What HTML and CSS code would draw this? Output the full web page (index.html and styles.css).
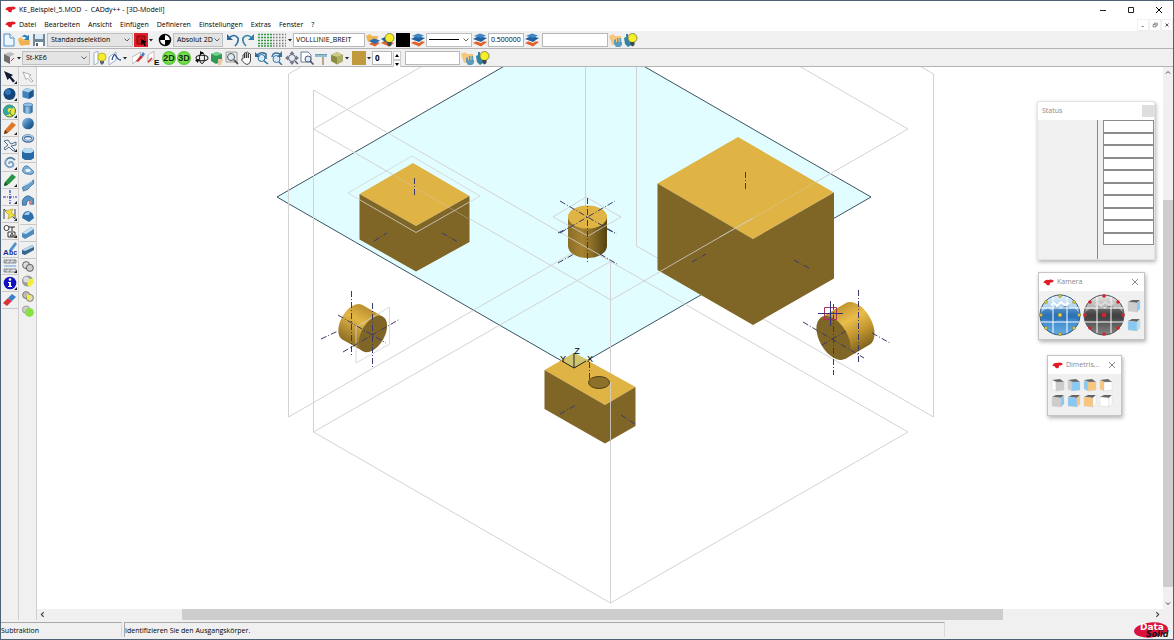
FILE: index.html
```html
<!DOCTYPE html>
<html lang="de">
<head>
<meta charset="utf-8">
<meta name="viewport" content="width=device-width, initial-scale=1">
<title>KE_Beispiel_5.MOD - CADdy++ - [3D-Modell]</title>
<link rel="stylesheet" href="styles.css">
</head>
<body>
<svg class="defs" aria-hidden="true">
  <defs>
    <linearGradient id="gBall" x1="0" y1="0" x2="1" y2="1"><stop offset="0" stop-color="#9cc8ea"/><stop offset=".5" stop-color="#3a7ab5"/><stop offset="1" stop-color="#123a66"/></linearGradient>
    <linearGradient id="gTube" x1="0" x2="1" y1="0" y2="0"><stop offset="0" stop-color="#2b659c"/><stop offset=".4" stop-color="#9fcdee"/><stop offset="1" stop-color="#245a8e"/></linearGradient>
    <radialGradient id="gGreen"><stop offset="0" stop-color="#a4f06a"/><stop offset=".7" stop-color="#6fdc45"/><stop offset="1" stop-color="#4cc030"/></radialGradient>
    <linearGradient id="gSkyBlue" x1="0" x2="0" y1="0" y2="1"><stop offset="0" stop-color="#e3f1fb"/><stop offset=".35" stop-color="#a6cdec"/><stop offset=".5" stop-color="#2f7cc4"/><stop offset="1" stop-color="#68aee4"/></linearGradient>
    <linearGradient id="gSkyGray" x1="0" x2="0" y1="0" y2="1"><stop offset="0" stop-color="#e8e8e8"/><stop offset=".35" stop-color="#a9a9a9"/><stop offset=".5" stop-color="#3c3c3c"/><stop offset="1" stop-color="#858585"/></linearGradient>
    <linearGradient id="gCyl" x1="0" x2="1" y1="0" y2="0"><stop offset="0" stop-color="#8a6d28"/><stop offset=".35" stop-color="#a5822f"/><stop offset=".6" stop-color="#8d7029"/><stop offset="1" stop-color="#54420f"/></linearGradient>
    <linearGradient id="gCylL" gradientUnits="userSpaceOnUse" x1="362" y1="304" x2="342" y2="339"><stop offset="0" stop-color="#b98f30"/><stop offset=".4" stop-color="#e4b645"/><stop offset="1" stop-color="#8d6e25"/></linearGradient>
    <linearGradient id="gCylR" gradientUnits="userSpaceOnUse" x1="845" y1="303" x2="869" y2="345"><stop offset="0" stop-color="#c0952f"/><stop offset=".35" stop-color="#e9bc4b"/><stop offset=".65" stop-color="#c4982f"/><stop offset="1" stop-color="#80631f"/></linearGradient>

    <symbol id="brand" viewBox="0 0 12 8"><path d="M0 4Q2 0 6 1Q9 0 12 2Q12 4 8 4L7 7Q4 8 3 5Z" fill="#e01b24"/></symbol>
    <symbol id="chev" viewBox="0 0 6 4"><path d="M.5 .5L3 3L5.500 .5" fill="none" stroke="#555" stroke-width=".9"/></symbol>
    <symbol id="drop" viewBox="0 0 4 14"><path d="M0 6H4L2 8.500Z" fill="#222"/></symbol>
    <symbol id="new" viewBox="0 0 14 14"><path d="M2 1H8L12 5V13H2Z" fill="#eaf5ff" stroke="#4f8cc4"/><path d="M8 1V5H12" fill="#fff" stroke="#4f8cc4"/></symbol>
    <symbol id="open" viewBox="0 0 14 14"><path d="M1 6L4 4L6 6H12L13 11L4 13Z" fill="#f4c064"/><path d="M1 6L5 8L13 7L12 12L3 12Z" fill="#f0b050"/><path d="M5 4Q7 0 10 3L12 2V7H7L9 5Q8 3 5 4Z" fill="#2c7cc0"/></symbol>
    <symbol id="save" viewBox="0 0 14 14"><path d="M1 1H13V13H1Z" fill="#6e8799"/><path d="M3 1H11V6H3Z" fill="#dbe9f4"/><path d="M3 9H11V13H3Z" fill="#fff"/><path d="M4 10H6V13H4Z" fill="#4a6274"/></symbol>
    <symbol id="pick" viewBox="0 0 14 14"><path d="M0 0H14V14H0Z" fill="#e3202a"/><path d="M3 3H11V11H3Z" fill="#c4141e" stroke="#7c0b12"/><path d="M7 6L13 9L10.500 9.500L12 13L10.500 13L9 10L7 12Z"/></symbol>
    <symbol id="origin" viewBox="0 0 14 14"><circle cx="7" cy="7" r="5.500" fill="#fff" stroke="#111" stroke-width="1.500"/><path d="M7 7V1.500A5.500 5.500 0 0 0 1.500 7ZM7 7V12.500A5.500 5.500 0 0 0 12.500 7Z"/></symbol>
    <symbol id="undo" viewBox="0 0 14 14"><path d="M3 5Q8 0 12 5Q13 9 9 13" fill="none" stroke="#2a6aa0" stroke-width="1.600"/><path d="M1 1V7H7Z" fill="#2a6aa0"/></symbol>
    <symbol id="redo" viewBox="0 0 14 14"><path d="M11 5Q6 0 2 5Q1 9 5 13" fill="none" stroke="#2f7fa5" stroke-width="1.600"/><path d="M13 1V7H7Z" fill="#2f7fa5"/></symbol>
    <symbol id="dots" viewBox="0 0 31 14"><path d="M2 1.500H16M2 4.500H16M2 7.500H16M2 10.500H16M2 13H16" stroke="#2f9a42" stroke-width="1.500" stroke-dasharray="2 1"/><path d="M17 1.500H30M17 4.500H30M17 7.500H30M17 10.500H30M17 13H30" stroke="#777" stroke-width="1.300" stroke-dasharray="1.500 1.500"/></symbol>
    <symbol id="layers" viewBox="0 0 14 14"><path d="M0 10L6 7L14 9L8 13.500Z" fill="#e2622b"/><path d="M0 7L6 4L14 6L8 10Z" fill="#fff"/><path d="M0 6L6 3L14 5L8 9Z" fill="#225f9e"/><path d="M1 3L7 .5L13 2.500L8 5Z" fill="#3d86c6"/></symbol>
    <symbol id="folderlayers" viewBox="0 0 14 14"><path d="M0 3L4 1L6 3L12 3L11 8L2 9Z" fill="#f1b556"/><path d="M3 11L8 8L14 10L9 13.500Z" fill="#e2622b"/><path d="M3 8L8 5.500L14 7.500L9 11Z" fill="#2a6eae"/></symbol>
    <symbol id="bulb" viewBox="0 0 14 14"><circle cx="8.500" cy="5" r="4.200" fill="#f7ee2b" stroke="#a5a015" stroke-width=".7"/><path d="M6.500 9H10.500V12L8.500 13.500L6.500 12Z" fill="#5d6870"/></symbol>
    <symbol id="bulblayers" viewBox="0 0 14 14"><path d="M0 10L5 7L13 10L8 13.500Z" fill="#e2622b"/><path d="M0 6L6 3L12 7L6 10Z" fill="#225f9e"/><circle cx="8.500" cy="5" r="4.500" fill="#f7ee2b" stroke="#6c6a20" stroke-width=".7"/><path d="M6.500 9H10.500V12L8.500 13.500L6.500 12Z" fill="#3d484f"/></symbol>
    <symbol id="folderhand" viewBox="0 0 14 14"><path d="M0 3L4 1L6 3L12 3L13 10L3 12Z" fill="#f7c67c"/><path d="M5 7L7 6V9H8V5H9.500V9H10.500V5H12V9H13V12L11 14H7L5 11Z" fill="#5a9cc0"/></symbol>
    <symbol id="bulbhand" viewBox="0 0 14 14"><path d="M0 5L2 4V1H4V6L7 4V12L4 14L1 11Z" fill="#2f84a8"/><circle cx="8.500" cy="5" r="4.500" fill="#f7ee2b" stroke="#6c6a20" stroke-width=".7"/><path d="M6.500 9H10.500V12L8.500 13.500L6.500 12Z" fill="#3d484f"/></symbol>
    <symbol id="boxgray" viewBox="0 0 14 14"><path d="M2 3L8 1L13 3L8 6Z" fill="#bdbdbd"/><path d="M2 3L8 6V13L2 10Z" fill="#6f6f6f"/><path d="M8 6L13 3V9L8 13Z" fill="#ececec"/><path d="M9 10L12 7" stroke="#d33" stroke-width="1"/></symbol>
    <symbol id="viewbulb" viewBox="0 0 14 14"><path d="M1 2L5 0V12L1 14Z" fill="#fff" stroke="#9bb0c8"/><circle cx="9" cy="6" r="4" fill="#f7ee2b" stroke="#a5a015" stroke-width=".7"/><path d="M7 10H11V12L9 14L7 12Z" fill="#5d6870"/></symbol>
    <symbol id="sketch" viewBox="0 0 14 14"><path d="M1 6L8 1V9L1 14Z" fill="#fff" stroke="#9bb0c8"/><path d="M4 9Q6 1 8 5T13 9" fill="none" stroke="#2b4e90" stroke-width="1.300"/></symbol>
    <symbol id="redpen" viewBox="0 0 14 14"><path d="M0 6L9 1L7 8L0 13Z" fill="#fff" stroke="#b8b8b8"/><path d="M4 10L9 4L11 6L6 11Z" fill="#cf2e2e"/><path d="M9 4L11 1L13 3L11 6Z" fill="#3f83c2"/></symbol>
    <symbol id="plane" viewBox="0 0 14 14"><path d="M1 4L7 0V8L1 12Z" fill="#fff" stroke="#c4b6b6"/><path d="M1 11L5 7" stroke="#cf2e2e" stroke-width="1.500"/><text x="7" y="14" class="glyph">E</text></symbol>
    <symbol id="g2d" viewBox="0 0 14 14"><circle cx="7" cy="7" r="7" fill="url(#gGreen)"/><text x="7" y="10" text-anchor="middle" class="glyph glyph-view">2D</text></symbol>
    <symbol id="g3d" viewBox="0 0 14 14"><circle cx="7" cy="7" r="7" fill="url(#gGreen)"/><text x="7" y="10" text-anchor="middle" class="glyph glyph-view">3D</text></symbol>
    <symbol id="orbit" viewBox="0 0 14 14"><ellipse cx="7" cy="7" rx="6" ry="2.800" fill="none" stroke="#222" stroke-width="1.100"/><ellipse cx="7" cy="7" rx="2.500" ry="5.500" fill="none" stroke="#222"/><path d="M0 9L4 8L3 12ZM9 2L5 0V4Z"/></symbol>
    <symbol id="greencube" viewBox="0 0 14 14"><path d="M1 3L7 1L12 3V10L6 13L1 10Z" fill="#2f9a54"/><path d="M1 3L7 1L12 3L6 5Z" fill="#75cf8f"/><path d="M8 8H13L11 14H8Z" fill="#e8c6a5"/></symbol>
    <symbol id="lens" viewBox="0 0 14 14"><path d="M1 1H12V11H1Z" fill="#e8e8e8" stroke="#9a9a9a"/><circle cx="6" cy="6" r="3.500" fill="#d9ecf7" stroke="#555"/><path d="M9 9L13 13" stroke="#555" stroke-width="1.800"/></symbol>
    <symbol id="hand" viewBox="0 0 14 14"><path d="M3 8V4Q4 3 4.500 4V7V2Q5.500 1 6.300 2V7V1.500Q7.500 .5 8.300 1.500V7V3Q9.500 2 10.500 3V10Q10 13 7 13.500Q5 13.500 1.500 9Q2 7 3 8Z" fill="#fff" stroke="#333" stroke-width=".9"/></symbol>
    <symbol id="zoomback" viewBox="0 0 14 14"><circle cx="6.500" cy="7" r="3.500" fill="#d9ecf7" stroke="#2b6a9a"/><path d="M2 4Q6 0 11 3V8M9 10L13 13" fill="none" stroke="#2b6a9a" stroke-width="1.500"/><path d="M0 1V6H5Z" fill="#2b6a9a"/></symbol>
    <symbol id="zoomfwd" viewBox="0 0 14 14"><circle cx="6.500" cy="8" r="3.500" fill="#d9ecf7" stroke="#35729c"/><path d="M2 6Q3 0 10 3M9 11L12 14" fill="none" stroke="#35729c" stroke-width="1.500"/><path d="M12 0V6H7Z" fill="#35729c"/></symbol>
    <symbol id="zoomall" viewBox="0 0 14 14"><circle cx="7" cy="7" r="3.500" fill="#e3edf2" stroke="#557"/><path d="M7 0L9.500 3H4.500ZM7 14L4.500 11H9.500ZM0 7L3 4.500V9.500ZM14 7L11 9.500V4.500Z" fill="#778"/><path d="M10 10L13 13" stroke="#557" stroke-width="1.500"/></symbol>
    <symbol id="zoompage" viewBox="0 0 14 14"><path d="M1 1H8L11 4V11H1Z" fill="#fff" stroke="#65809a"/><circle cx="8" cy="8" r="3" fill="#d9ecf7" stroke="#557"/><path d="M10 10L13.500 13.500" stroke="#557" stroke-width="1.600"/></symbol>
    <symbol id="roller" viewBox="0 0 14 14"><path d="M0 3H12V6H0Z" fill="#8fc0d6"/><path d="M0 3H12V4H0Z" fill="#7596a8"/><path d="M7 6H9V14H7Z" fill="#b9a888"/></symbol>
    <symbol id="olivecube" viewBox="0 0 14 14"><path d="M1 4L7 1L13 4V10L7 13.500L1 10Z" fill="#8c8c3e"/><path d="M1 4L7 1L13 4L7 6Z" fill="#c9cc8a"/><path d="M7 6L13 4V10L7 13.500Z" fill="#aeb06a"/></symbol>
    <symbol id="corner" viewBox="0 0 14 14"><path d="M14 11V14H11Z" fill="#222"/></symbol>

    <symbol id="arrow" viewBox="0 0 14 14"><path d="M1 1L10 5L8 6.500L12 11L10 12.500L6.500 8L4.500 10Z" fill="#111c33"/></symbol>
    <symbol id="arroww" viewBox="0 0 14 14"><path d="M2 2L10 5L8 6.500L12 11L10.500 12L6.500 8L5 9.500Z" fill="#fff" stroke="#999" stroke-width=".8"/></symbol>
    <symbol id="navball" viewBox="0 0 14 14"><circle cx="6.500" cy="7" r="6" fill="#14457c"/><circle cx="5" cy="5" r="3" fill="#2e76b8"/></symbol>
    <symbol id="swirl" viewBox="0 0 14 14"><circle cx="6.500" cy="7" r="6" fill="#f1e43a" stroke="#2a8048"/><path d="M6 1A6 6 0 0 0 2 11Q5 12 7 9Q4 8 5 5Q7 3 9 5L11 3Q9 1 6 1Z" fill="#35a6a2"/><path d="M8 6Q5 9 10 12" fill="none" stroke="#2a8048"/></symbol>
    <symbol id="pencilo" viewBox="0 0 14 14"><path d="M1 13L2 9L9 1L13 4L6 11Z" fill="#e07a2b"/><path d="M1 13L2 9L5 12Z" fill="#5b3413"/></symbol>
    <symbol id="penciln" viewBox="0 0 14 14"><path d="M1 13L2 9L9 1L13 4L6 11Z" fill="#2a9444"/><path d="M1 13L2 9L5 12Z" fill="#174c22"/></symbol>
    <symbol id="tools" viewBox="0 0 14 14"><path d="M1 3L5 2L8 6L13 4V7L8 8L12 12L10 13L6 9L2 12L1 10L5 7Z" fill="#e8f0f6" stroke="#44617e" stroke-width=".9"/></symbol>
    <symbol id="turn" viewBox="0 0 14 14"><path d="M12 4Q8 0 4 3Q1 6 3 9Q6 13 10 10Q11 8 9 6Q6 5 6 8" fill="none" stroke="#7ba4c8" stroke-width="2"/><path d="M12 4Q8 0 4 3" fill="none" stroke="#476b8c"/></symbol>
    <symbol id="axes" viewBox="0 0 14 14"><path d="M7 0V14M0 7H14" stroke="#2d38c8" stroke-width="1.200" stroke-dasharray="3 1 1 1"/></symbol>
    <symbol id="flash" viewBox="0 0 14 14"><path d="M1 12V2M12 12V2M1 2L12 12" stroke="#445" fill="none"/><path d="M2 4L10 2L8 6L12 8L5 12L6 8Z" fill="#f3e23d" stroke="#9e921a" stroke-width=".6"/></symbol>
    <symbol id="parts" viewBox="0 0 14 14"><circle cx="3.500" cy="4" r="2.500" fill="#fff" stroke="#333"/><path d="M6 3H12M9 3V7M5 8H12V13H5ZM9 9L10.500 12H7Z" fill="#fff" stroke="#333"/></symbol>
    <symbol id="abc" viewBox="0 0 14 14"><path d="M6 8L12 0L14 2L8 10Z" fill="#4f8fd0"/><text x="0" y="13" class="glyph glyph-blue">A</text><text x="6" y="13" class="glyph glyph-blue glyph-small">bc</text></symbol>
    <symbol id="hatch" viewBox="0 0 14 14"><path d="M1 1H13V4H1ZM1 10H13V13H1Z" fill="#dfe6ee" stroke="#666" stroke-width=".7"/><path d="M2 4L4 1M6 4L8 1M10 4L12 1M2 13L4 10M6 13L8 10" stroke="#666" stroke-width=".7"/><path d="M1 6H13V8H1Z" fill="#a9c6e2"/></symbol>
    <symbol id="info" viewBox="0 0 14 14"><circle cx="7" cy="7" r="6.300" fill="#1010c0"/><circle cx="7" cy="3.500" r="1.300" fill="#fff"/><path d="M5 6H8V10H9V11H5V10H6V7H5Z" fill="#fff"/></symbol>
    <symbol id="eraser" viewBox="0 0 14 14"><path d="M0 10L5 5L9 8L4 13Z" fill="#d8333c"/><path d="M5 5L9 1L13 4L9 8Z" fill="#3b80c6"/></symbol>
    <symbol id="cube" viewBox="0 0 14 14"><path d="M1 4L5 1L13 3V10L8 13L1 11Z" fill="#3f84bd"/><path d="M1 4L5 1L13 3L8 6Z" fill="#a9d2ee"/><path d="M8 6L13 3V10L8 13Z" fill="#1f568a"/></symbol>
    <symbol id="tube" viewBox="0 0 14 14"><path d="M2 3V11Q7 15 12 11V3Z" fill="url(#gTube)"/><ellipse cx="7" cy="3" rx="5" ry="2" fill="#8fc2e6" stroke="#2f6ba2" stroke-width=".6"/></symbol>
    <symbol id="ball" viewBox="0 0 14 14"><circle cx="7" cy="7" r="6.300" fill="url(#gBall)"/></symbol>
    <symbol id="torus" viewBox="0 0 14 14"><ellipse cx="7" cy="7" rx="5" ry="3" fill="none" stroke="#35638f" stroke-width="3.200"/><ellipse cx="7" cy="6.500" rx="5" ry="3" fill="none" stroke="#a9cbe8" stroke-width="1.500"/></symbol>
    <symbol id="prism" viewBox="0 0 14 14"><path d="M1 4V11L4 13H10L13 11V4L10 1H4Z" fill="#276aa6"/><path d="M1 4L4 1H10L13 4L10 6H4Z" fill="#b5dcf3"/></symbol>
    <symbol id="sweep" viewBox="0 0 14 14"><path d="M2 4Q5 0 9 4L13 8Q13 12 8 11Q2 11 1 7Z" fill="#7fb2da" stroke="#2c6195" stroke-width=".8"/><ellipse cx="7" cy="7" rx="3" ry="1.500" fill="#e9f4fb"/></symbol>
    <symbol id="loft" viewBox="0 0 14 14"><path d="M1 9Q7 7 13 1V5Q9 8 7 11L2 13Z" fill="#6da3ce" stroke="#2c6195" stroke-width=".8"/><path d="M2 7Q7 5 11 2" fill="none" stroke="#c6dff1" stroke-width="1.500"/></symbol>
    <symbol id="pipe" viewBox="0 0 14 14"><path d="M1 12V7Q3 2 8 2L13 5V11H9V7Q6 6 5 12Z" fill="#5694c6" stroke="#285b8c" stroke-width=".8"/><path d="M9 7H11V11H9Z" fill="#d7868f"/></symbol>
    <symbol id="dome" viewBox="0 0 14 14"><path d="M1 9Q2 2 7 2Q12 3 13 9L8 13Z" fill="#2c6fab"/><path d="M3 6Q5 2 9 3L8 6Z" fill="#9ccaec"/></symbol>
    <symbol id="slab" viewBox="0 0 14 14"><path d="M1 7L10 1L13 3V8L4 13L1 11Z" fill="#4c8abd"/><path d="M1 7L10 1L13 3L5 8Z" fill="#c7e1f4"/></symbol>
    <symbol id="bar" viewBox="0 0 14 14"><path d="M1 7L11 2L13 4V7L4 12L1 11Z" fill="#35688f"/><path d="M1 7L11 2L13 4L4 8Z" fill="#b7d9ef"/></symbol>
    <symbol id="ringsg" viewBox="0 0 14 14"><circle cx="5" cy="5.500" r="3.800" fill="#ddd" stroke="#555"/><circle cx="9" cy="8.500" r="3.800" fill="#ccc" stroke="#555"/></symbol>
    <symbol id="ringy" viewBox="0 0 14 14"><circle cx="6.500" cy="6.500" r="6" fill="#9b9b9b"/><path d="M7 4H13V9L9 13Q5 12 7 4Z" fill="#f2ec3c"/><circle cx="5" cy="5" r="3" fill="#ddd"/></symbol>
    <symbol id="ringsy" viewBox="0 0 14 14"><circle cx="5" cy="5.500" r="3.800" fill="#bbb" stroke="#777"/><circle cx="9" cy="8.500" r="3.800" fill="#e2dfa8" stroke="#777"/><ellipse cx="7" cy="7" rx="1.500" ry="3" fill="#f2ec3c"/></symbol>
    <symbol id="ringsn" viewBox="0 0 14 14"><circle cx="5" cy="5" r="4" fill="#ccc" stroke="#999"/><circle cx="8.500" cy="8" r="4.800" fill="#86e244"/></symbol>
    <symbol id="closex" viewBox="0 0 8 8"><path d="M1 1L7 7M7 1L1 7" stroke="currentColor" fill="none"/></symbol>
  </defs>
</svg>

<div class="window">
  <header class="titlebar">
    <svg class="brand"><use href="#brand"/></svg>
    <h1>KE_Beispiel_5.MOD&nbsp; -&nbsp; CADdy++ - [3D-Modell]</h1>
    <div class="winbtns">
      <button type="button" aria-label="Minimieren"><svg viewBox="0 0 8 8"><path d="M1 4.500H7" stroke="#222"/></svg></button>
      <button type="button" aria-label="Maximieren"><svg viewBox="0 0 8 8"><path d="M1.500 1.500H6.500V6.500H1.500Z" fill="none" stroke="#222"/></svg></button>
      <button type="button" aria-label="Schließen"><svg viewBox="0 0 8 8"><use href="#closex"/></svg></button>
    </div>
  </header>

  <nav class="menubar">
    <svg class="brand"><use href="#brand"/></svg>
    <button type="button">Datei</button><button type="button">Bearbeiten</button><button type="button">Ansicht</button><button type="button">Einfügen</button><button type="button">Definieren</button><button type="button">Einstellungen</button><button type="button">Extras</button><button type="button">Fenster</button><button type="button">?</button>
    <div class="mdibtns">
      <button type="button" aria-label="Dokument minimieren"><svg viewBox="0 0 8 8"><path d="M2 6H5" stroke="#555"/></svg></button>
      <button type="button" aria-label="Dokument wiederherstellen"><svg viewBox="0 0 8 8"><path d="M1.500 3.500H5.500V6.500H1.500ZM3 3V1.500H7V4.500H6" fill="none" stroke="#555" stroke-width=".9"/></svg></button>
      <button type="button" aria-label="Dokument schließen"><svg viewBox="0 0 8 8"><path d="M2 2L6 6M6 2L2 6" stroke="#555" stroke-width="1.300"/></svg></button>
    </div>
  </nav>

  <div class="toolbar" role="toolbar" aria-label="Standard">
    <button type="button" aria-label="Neu"><svg><use href="#new"/></svg></button>
    <button type="button" aria-label="Öffnen"><svg><use href="#open"/></svg></button>
    <button type="button" aria-label="Speichern"><svg><use href="#save"/></svg></button>
    <span class="combo w-sel"><select aria-label="Selektion"><option>Standardselektion</option></select><svg class="chev"><use href="#chev"/></svg></span>
    <button type="button" aria-label="Selektieren"><svg><use href="#pick"/></svg></button>
    <button type="button" class="drop" aria-label="Selektionsarten"><svg><use href="#drop"/></svg></button>
    <i class="sp3"></i>
    <button type="button" aria-label="Ursprung"><svg><use href="#origin"/></svg></button>
    <span class="combo w-abs"><select aria-label="Koordinaten"><option>Absolut 2D</option></select><svg class="chev"><use href="#chev"/></svg></span>
    <i class="sp1"></i>
    <button type="button" aria-label="Rückgängig"><svg><use href="#undo"/></svg></button>
    <button type="button" aria-label="Wiederholen"><svg><use href="#redo"/></svg></button>
    <button type="button" class="wide" aria-label="Raster"><svg><use href="#dots"/></svg></button>
    <button type="button" class="drop" aria-label="Rasterarten"><svg><use href="#drop"/></svg></button>
    <input class="w-line" type="text" aria-label="Linienart" value="VOLLLINIE_BREIT">
    <button type="button" aria-label="Linienart wählen"><svg><use href="#folderlayers"/></svg></button>
    <button type="button" aria-label="Linienart übernehmen"><svg><use href="#bulblayers"/></svg></button>
    <button type="button" class="swatch black" aria-label="Farbe"></button>
    <button type="button" aria-label="Ebene Farbe"><svg><use href="#layers"/></svg></button>
    <span class="combo light w-style"><select aria-label="Strichart"><option></option></select><b class="stroke"></b><svg class="chev"><use href="#chev"/></svg></span>
    <button type="button" aria-label="Ebene Strichart"><svg><use href="#layers"/></svg></button>
    <input class="w-num" type="text" aria-label="Strichbreite" value="0.500000">
    <button type="button" aria-label="Ebene Breite"><svg><use href="#layers"/></svg></button>
    <i class="sp1"></i>
    <input class="w-free" type="text" aria-label="Gruppe">
    <button type="button" aria-label="Gruppe wählen"><svg><use href="#folderhand"/></svg></button>
    <button type="button" aria-label="Gruppe übernehmen"><svg><use href="#bulbhand"/></svg></button>
  </div>

  <div class="toolbar" role="toolbar" aria-label="Modell">
    <button type="button" aria-label="Körper"><svg><use href="#boxgray"/></svg></button>
    <button type="button" class="drop" aria-label="Körperarten"><svg><use href="#drop"/></svg></button>
    <span class="combo w-part"><select aria-label="Teil"><option>St-KE6</option></select><svg class="chev"><use href="#chev"/></svg></span>
    <i class="sp1"></i>
    <button type="button" aria-label="Ebene anzeigen"><svg><use href="#viewbulb"/></svg></button>
    <button type="button" aria-label="Skizze"><svg><use href="#sketch"/></svg></button>
    <button type="button" class="drop" aria-label="Skizzenarten"><svg><use href="#drop"/></svg></button>
    <i class="sp3"></i>
    <button type="button" aria-label="Arbeitsebene"><svg><use href="#redpen"/></svg></button>
    <button type="button" aria-label="Ebene E"><svg><use href="#plane"/></svg></button>
    <button type="button" aria-label="2D"><svg><use href="#g2d"/></svg></button>
    <button type="button" aria-label="3D"><svg><use href="#g3d"/></svg></button>
    <i class="sp2"></i>
    <button type="button" aria-label="Drehen"><svg><use href="#orbit"/></svg></button>
    <button type="button" aria-label="Ansicht"><svg><use href="#greencube"/></svg></button>
    <button type="button" aria-label="Zoom"><svg><use href="#lens"/></svg></button>
    <button type="button" aria-label="Verschieben"><svg><use href="#hand"/></svg></button>
    <button type="button" aria-label="Zoom zurück"><svg><use href="#zoomback"/></svg></button>
    <button type="button" aria-label="Zoom vor"><svg><use href="#zoomfwd"/></svg></button>
    <button type="button" aria-label="Zoom alles"><svg><use href="#zoomall"/></svg></button>
    <button type="button" aria-label="Zoom Blatt"><svg><use href="#zoompage"/></svg></button>
    <button type="button" aria-label="Neu zeichnen"><svg><use href="#roller"/></svg></button>
    <button type="button" aria-label="Darstellung"><svg><use href="#olivecube"/></svg></button>
    <button type="button" class="drop" aria-label="Darstellungsarten"><svg><use href="#drop"/></svg></button>
    <i class="sp1"></i>
    <button type="button" class="swatch gold" aria-label="Körperfarbe"></button>
    <button type="button" class="drop" aria-label="Farben"><svg><use href="#drop"/></svg></button>
    <input class="w-index" type="text" aria-label="Index" value="0">
    <span class="spin"><button type="button" aria-label="Mehr"><svg viewBox="0 0 4 3"><path d="M0 3H4L2 0Z"/></svg></button><button type="button" aria-label="Weniger"><svg viewBox="0 0 4 3"><path d="M0 0H4L2 3Z"/></svg></button></span>
    <i class="sp2"></i>
    <input class="w-mat" type="text" aria-label="Material">
    <button type="button" aria-label="Material wählen"><svg><use href="#folderhand"/></svg></button>
    <button type="button" aria-label="Material übernehmen"><svg><use href="#bulbhand"/></svg></button>
  </div>

  <main class="work">
    <div class="palette main-tools">
      <button type="button" aria-label="Auswahl"><svg><use href="#arrow"/><use href="#corner"/></svg></button>
      <button type="button" aria-label="Körper"><svg><use href="#navball"/><use href="#corner"/></svg></button>
      <button type="button" aria-label="Flächen"><svg><use href="#swirl"/><use href="#corner"/></svg></button>
      <button type="button" aria-label="Zeichnen"><svg><use href="#pencilo"/><use href="#corner"/></svg></button>
      <button type="button" aria-label="Ändern"><svg><use href="#tools"/><use href="#corner"/></svg></button>
      <button type="button" aria-label="Transformieren"><svg><use href="#turn"/><use href="#corner"/></svg></button>
      <button type="button" aria-label="Bearbeiten"><svg><use href="#penciln"/><use href="#corner"/></svg></button>
      <button type="button" aria-label="Achsen"><svg><use href="#axes"/><use href="#corner"/></svg></button>
      <button type="button" aria-label="Bemaßung"><svg><use href="#flash"/><use href="#corner"/></svg></button>
      <button type="button" aria-label="Normteile"><svg><use href="#parts"/><use href="#corner"/></svg></button>
      <button type="button" aria-label="Text"><svg><use href="#abc"/></svg></button>
      <button type="button" aria-label="Schraffur"><svg><use href="#hatch"/><use href="#corner"/></svg></button>
      <button type="button" aria-label="Info"><svg><use href="#info"/><use href="#corner"/></svg></button>
      <button type="button" aria-label="Löschen"><svg><use href="#eraser"/></svg></button>
    </div>
    <div class="palette solid-tools">
      <button type="button" class="sep" aria-label="Zeiger"><svg><use href="#arroww"/></svg></button>
      <button type="button" aria-label="Quader"><svg><use href="#cube"/></svg></button>
      <button type="button" aria-label="Zylinder"><svg><use href="#tube"/></svg></button>
      <button type="button" aria-label="Kugel"><svg><use href="#ball"/></svg></button>
      <button type="button" aria-label="Torus"><svg><use href="#torus"/></svg></button>
      <button type="button" class="sep" aria-label="Prisma"><svg><use href="#prism"/></svg></button>
      <button type="button" aria-label="Profil"><svg><use href="#sweep"/></svg></button>
      <button type="button" aria-label="Übergang"><svg><use href="#loft"/></svg></button>
      <button type="button" aria-label="Rohr"><svg><use href="#pipe"/></svg></button>
      <button type="button" class="sep" aria-label="Rotation"><svg><use href="#dome"/></svg></button>
      <button type="button" class="sep" aria-label="Abrunden"><svg><use href="#slab"/></svg></button>
      <button type="button" class="sep" aria-label="Fase"><svg><use href="#bar"/></svg></button>
      <button type="button" aria-label="Vereinigung"><svg><use href="#ringsg"/></svg></button>
      <button type="button" aria-label="Subtraktion"><svg><use href="#ringy"/></svg></button>
      <button type="button" aria-label="Durchschnitt"><svg><use href="#ringsy"/></svg></button>
      <button type="button" aria-label="Trennen"><svg><use href="#ringsn"/></svg></button>
    </div>

    <section class="view">
      <svg class="scene" viewBox="37 67 1126 542" preserveAspectRatio="xMidYMid slice" role="img" aria-label="3D-Modell">
        <path class="plane" d="M277 197L574 26L871 197L574 368Z"/>
        <g class="wire">
          <path d="M288.500 74L585.500 -97V245.500L288.500 417Z"/>
          <path d="M933.500 74L636.500 -97V246L933.500 417Z"/>
          <path d="M313.500 129L611 -43L908 129L611 300Z"/>
          <path d="M313.500 90L610.500 261.500V603L313.500 432Z"/>
          <path d="M313.500 432L610.500 261.500L908 432L610.500 603"/>
          <path d="M586 197L621 217L588 236L553 217Z"/>
        </g>

        <path class="top" d="M413 163L469.500 196L416 226L359.500 194Z"/>
        <path class="side" d="M359.500 194L416 226L469.500 196V242L416 271.500L359.500 239.500Z"/>

        <path class="top" d="M738 137L834 192.500L753 239L657.500 183.500Z"/>
        <path class="side" d="M657.500 183.500L753 239L834 192.500V278.500L753 325L657.500 270Z"/>

        <path d="M568 217V246A19.500 12 0 0 0 607 246V217Z" fill="url(#gCyl)"/>
        <ellipse class="top" cx="587.500" cy="217" rx="19.500" ry="11.500"/>

        <path class="top" d="M574 353L635.500 387L605 405L544.500 370Z"/>
        <path class="side" d="M544.500 370L605 405L635.500 387V426L605 443.500L544.500 409Z"/>
        <ellipse cx="599" cy="382.500" rx="10.500" ry="6" fill="#8d7029" stroke="#4e3f18"/>
        <path d="M562 361L574 353L588 360L574 368Z" fill="#cfc56e"/>

        <path d="M383 316.700L362 304.700A20 11.500 -60 0 0 342 339.300L363 351.300Z" fill="url(#gCylL)"/>
        <ellipse cx="373" cy="334" rx="20" ry="11.500" transform="rotate(-60 373 334)" class="side"/>

        <path d="M821.500 317.200L845.500 303.200A24 14 60 0 1 869.500 344.800L845.500 358.800Z" fill="url(#gCylR)"/>
        <ellipse cx="833.500" cy="338" rx="24" ry="14" transform="rotate(60 833.500 338)" class="side"/>

        <g class="wire over">
          <path d="M348 193L412 156L480 196L416 232.500Z"/>
          <path d="M657.500 273L753 218"/>
          <path d="M356 363V327L389.500 307V344Z"/>
          <path d="M610.500 382V440"/>
          <path d="M568 237L607 259M568 225L588 236L607 225"/>
        </g>
        <path class="wire faint" d="M720 237L834 171.500M376 165L469 219"/>

        <path class="edge" d="M562 361L574 368L586 361M574 368V353"/>
        <g class="axis">
          <path d="M414.500 178V195M374 241L387 233M442 233L458 242"/>
          <path d="M745.500 172V189M692 262L706 254M794 260L809 268"/>
          <path d="M587.500 198V262M560 201L615 233M560 233L615 201M558 263L574 254M600 254L617 264M558 233L568 228M607 229L617 234"/>
          <path d="M589.500 362V379M560 414L576 405M621 415L635 424"/>
          <path d="M351.500 291V356M372.500 303V368M321 339L338 331M343 352L400 319M338 315L386 343"/>
          <path d="M858.500 290V362M833.500 304V375M803 322L864 358M822 345L846 331M872 333L890 343"/>
        </g>
        <g class="triad">
          <text x="577" y="354" text-anchor="middle">Z</text>
          <text x="563" y="362" text-anchor="middle">Y</text>
          <text x="590" y="362" text-anchor="middle">X</text>
        </g>
        <path d="M824.500 307.500H836.500V319.500H824.500Z" fill="none" stroke="#b0305c"/>
        <path d="M818 313.500H843M830.500 301V326" stroke="#33337a"/>
      </svg>

      <section class="panel status-panel" aria-label="Status">
        <header><h2>Status</h2><button type="button" class="ghost" aria-label="Status schließen"></button></header>
        <div class="status-body">
          <div class="status-names"></div>
          <div class="status-fields">
            <input type="text" aria-label="Wert 1"><input type="text" aria-label="Wert 2"><input type="text" aria-label="Wert 3"><input type="text" aria-label="Wert 4"><input type="text" aria-label="Wert 5"><input type="text" aria-label="Wert 6"><input type="text" aria-label="Wert 7"><input type="text" aria-label="Wert 8"><input type="text" aria-label="Wert 9"><input type="text" aria-label="Wert 10">
          </div>
        </div>
      </section>

      <section class="panel camera-panel" aria-label="Kamera">
        <header><svg class="brand"><use href="#brand"/></svg><h2>Kamera</h2><button type="button" aria-label="Kamera schließen"><svg><use href="#closex"/></svg></button></header>
        <div class="camera-body">
          <button type="button" class="globe" aria-label="Kamera drehen">
            <svg viewBox="0 0 42 42"><circle cx="21" cy="21" r="20" fill="url(#gSkyBlue)" stroke="#34597c"/><path d="M3 18Q8 12 13 17Q16 9 22 15Q28 8 31 15Q37 12 40 20L40 26Q32 22 27 27Q20 23 15 28Q8 24 2 26Z" fill="#2a6fb2" opacity=".7"/><path d="M14 3V39M28 3V39M2 14H40M2 28H40" stroke="#fff"/><path d="M12 11L15 9L18 12L22 8L26 11L30 9" stroke="#fff" stroke-width="2" fill="none"/><g fill="#e8d84a" stroke="#857820" stroke-width=".6"><circle cx="21" cy="21" r="2"/><circle cx="21" cy="2" r="1.500"/><circle cx="21" cy="40" r="1.500"/><circle cx="2" cy="21" r="1.500"/><circle cx="40" cy="21" r="1.500"/><circle cx="7" cy="8" r="1.500"/><circle cx="35" cy="8" r="1.500"/><circle cx="7" cy="34" r="1.500"/><circle cx="35" cy="34" r="1.500"/></g></svg>
          </button>
          <button type="button" class="globe" aria-label="Modell drehen">
            <svg viewBox="0 0 42 42"><circle cx="21" cy="21" r="20" fill="url(#gSkyGray)" stroke="#555"/><path d="M3 18Q8 12 13 17Q16 9 22 15Q28 8 31 15Q37 12 40 20L40 26Q32 22 27 27Q20 23 15 28Q8 24 2 26Z" fill="#444" opacity=".7"/><path d="M14 3V39M28 3V39M2 14H40M2 28H40" stroke="#fff"/><path d="M12 11L15 9L18 12L22 8L26 11L30 9" stroke="#ddd" stroke-width="2" fill="none"/><g fill="#cf2530"><circle cx="21" cy="21" r="2.300"/><circle cx="21" cy="2" r="1.800"/><circle cx="21" cy="40" r="1.800"/><circle cx="2" cy="21" r="1.800"/><circle cx="40" cy="21" r="1.800"/><circle cx="7" cy="8" r="1.800"/><circle cx="35" cy="8" r="1.800"/><circle cx="7" cy="34" r="1.800"/><circle cx="35" cy="34" r="1.800"/></g></svg>
          </button>
          <div class="minis">
            <button type="button" class="mini gb" aria-label="Ansicht rechts"><svg viewBox="0 0 14 14"><path class="t" d="M1 3L5 1H13L10 4Z"/><path class="l" d="M1 3L10 4V13L1 12Z"/><path class="r" d="M10 4L13 1V10L10 13Z"/></svg></button>
            <button type="button" class="mini bb" aria-label="Ansicht vorne"><svg viewBox="0 0 14 14"><path class="t" d="M1 3L5 1H13L10 4Z"/><path class="l" d="M1 3L10 4V13L1 12Z"/><path class="r" d="M10 4L13 1V10L10 13Z"/></svg></button>
          </div>
        </div>
      </section>

      <section class="panel dim-panel" aria-label="Dimetrische Ansichten">
        <header><svg class="brand"><use href="#brand"/></svg><h2>Dimetris...</h2><button type="button" aria-label="Dimetrie schließen"><svg><use href="#closex"/></svg></button></header>
        <div class="dim-body">
          <button type="button" class="mini wg" aria-label="Dimetrie 1"><svg viewBox="0 0 14 14"><path class="t" d="M1 2L9 1L13 4H5Z"/><path class="l" d="M1 2L5 4V13L1 11Z"/><path class="r" d="M5 4H13V12L5 13Z"/></svg></button>
          <button type="button" class="mini gb2" aria-label="Dimetrie 2"><svg viewBox="0 0 14 14"><path class="t" d="M1 2L9 1L13 4H5Z"/><path class="l" d="M1 2L5 4V13L1 11Z"/><path class="r" d="M5 4H13V12L5 13Z"/></svg></button>
          <button type="button" class="mini bo" aria-label="Dimetrie 3"><svg viewBox="0 0 14 14"><path class="t" d="M1 2L9 1L13 4H5Z"/><path class="l" d="M1 2L5 4V13L1 11Z"/><path class="r" d="M5 4H13V12L5 13Z"/></svg></button>
          <button type="button" class="mini ow" aria-label="Dimetrie 4"><svg viewBox="0 0 14 14"><path class="t" d="M1 2L9 1L13 4H5Z"/><path class="l" d="M1 2L5 4V13L1 11Z"/><path class="r" d="M5 4H13V12L5 13Z"/></svg></button>
          <button type="button" class="mini gb" aria-label="Dimetrie 5"><svg viewBox="0 0 14 14"><path class="t" d="M1 3L5 1H13L10 4Z"/><path class="l" d="M1 3L10 4V13L1 12Z"/><path class="r" d="M10 4L13 1V10L10 13Z"/></svg></button>
          <button type="button" class="mini bo2" aria-label="Dimetrie 6"><svg viewBox="0 0 14 14"><path class="t" d="M1 3L5 1H13L10 4Z"/><path class="l" d="M1 3L10 4V13L1 12Z"/><path class="r" d="M10 4L13 1V10L10 13Z"/></svg></button>
          <button type="button" class="mini ow2" aria-label="Dimetrie 7"><svg viewBox="0 0 14 14"><path class="t" d="M1 3L5 1H13L10 4Z"/><path class="l" d="M1 3L10 4V13L1 12Z"/><path class="r" d="M10 4L13 1V10L10 13Z"/></svg></button>
          <button type="button" class="mini wg2" aria-label="Dimetrie 8"><svg viewBox="0 0 14 14"><path class="t" d="M1 3L5 1H13L10 4Z"/><path class="l" d="M1 3L10 4V13L1 12Z"/><path class="r" d="M10 4L13 1V10L10 13Z"/></svg></button>
        </div>
      </section>
    </section>

    <div class="vscroll">
      <button type="button" aria-label="Nach oben"><svg viewBox="0 0 6 6"><path d="M1 4L3 2L5 4"/></svg></button>
      <div class="track"><i class="before"></i><i class="thumb"></i><i class="after"></i></div>
      <button type="button" aria-label="Nach unten"><svg viewBox="0 0 6 6"><path d="M1 2L3 4L5 2"/></svg></button>
    </div>
    <div class="hscroll">
      <button type="button" aria-label="Nach links"><svg viewBox="0 0 6 6"><path d="M4 1L2 3L4 5"/></svg></button>
      <div class="track"><i class="before"></i><i class="thumb"></i><i class="after"></i></div>
      <button type="button" aria-label="Nach rechts"><svg viewBox="0 0 6 6"><path d="M2 1L4 3L2 5"/></svg></button>
    </div>
  </main>

  <footer class="statusbar">
    <p class="mode">Subtraktion</p>
    <p class="hint">Identifizieren Sie den Ausgangskörper.</p>
    <svg class="logo" viewBox="0 0 40 18" role="img" aria-label="Data Solid"><ellipse cx="18" cy="9" rx="17" ry="7.500" fill="#d8123c" transform="rotate(-5 18 9)"/><text x="7" y="9" class="logo-a">Data</text><text x="13" y="16" class="logo-b">Solid</text></svg>
  </footer>
</div>
</body>
</html>
```
FILE: styles.css
```css
* { box-sizing: border-box; }

body {
  margin: 0;
  font-family: "Open Sans", "Noto Sans", sans-serif;
  font-size: 7px;
  line-height: 12px;
  color: #000;
}

button, input, select {
  margin: 0;
  padding: 0;
  border: 0;
  border-radius: 0;
  background: none;
  font: inherit;
  color: inherit;
}

button svg { display: block; width: 100%; height: 100%; }
h1, h2, p { margin: 0; font-size: inherit; font-weight: 400; }

.defs { position: absolute; width: 0; height: 0; }

.window {
  display: flex;
  flex-direction: column;
  height: 100vh;
  border: 1px solid #4f6175;
  background: #f0f0f0;
}

/* Title and menu */
.titlebar, .menubar {
  display: flex;
  align-items: center;
  flex: none;
  padding-left: 4px;
  background: #fff;
}
.titlebar { height: 17px; }
.menubar { height: 13px; }
.brand { flex: none; width: 11px; height: 7px; margin-right: 3px; }
.winbtns, .mdibtns { display: flex; margin-left: auto; }
.winbtns button { width: 28px; height: 16px; padding: 4px 10px; }
.mdibtns button { width: 12px; height: 12px; padding: 2px; border: 1px solid #f0f0f0; }
.menubar > button { margin-right: 8px; }

/* Toolbars */
.toolbar {
  display: flex;
  align-items: center;
  gap: 1px;
  flex: none;
  height: 18px;
  padding-left: 1px;
  border-bottom: 1px solid #b4b4b4;
}
.toolbar > button { flex: none; width: 14px; height: 14px; }
.toolbar > .drop { width: 4px; }
.toolbar > .wide { width: 31px; }
.toolbar input {
  flex: none;
  height: 14px;
  padding: 0 2px;
  border: 1px solid #b8b8b8;
  background: #fff;
}
.sp1 { width: 1px; }
.sp2 { width: 2px; }
.sp3 { width: 3px; }
.combo { position: relative; flex: none; height: 14px; }
.combo select {
  display: block;
  width: 100%;
  height: 14px;
  padding: 0 8px 0 3px;
  border: 1px solid #c0c0c0;
  background: #e4e4e4;
  appearance: none;
  line-height: 11px;
}
.combo.light select { background: #fff; }
.chev { position: absolute; right: 3px; top: 5px; width: 6px; height: 4px; pointer-events: none; }
.stroke { position: absolute; left: 3px; top: 6px; width: 30px; height: 1px; background: #000; pointer-events: none; }
.w-sel { width: 86px; }
.w-abs { width: 50px; }
.w-part { width: 68px; }
.w-style { width: 46px; }
.w-line { width: 72px; }
.w-num { width: 36px; }
.w-free { width: 66px; }
.w-mat { width: 55px; }
.toolbar .w-index { width: 20px; font-size: 8px; font-weight: 700; }
.black { background: #000; }
.gold { background: #c09a3c; }
.spin { display: grid; width: 8px; height: 14px; }
.spin button { padding: 2px 1px; border: 1px solid #ccc; background: #fff; }
.glyph { font: 700 8px "Liberation Sans", sans-serif; }
.glyph-view { font-size: 9px; fill: #0b3010; }
.glyph-blue { fill: #1a2f9c; }
.glyph-small { font-size: 7px; }

/* Workspace */
.work {
  display: grid;
  grid-template: minmax(0, 1fr) 11px / 18px 18px minmax(0, 1fr) 10px;
  flex: 1;
  min-height: 0;
}
.palette {
  display: flex;
  flex-direction: column;
  grid-row: 1 / 3;
  padding: 2px 1px 0;
  border-right: 1px solid #cfcfcf;
}
.palette button { flex: none; width: 16px; height: 15px; padding: 1px; }
.main-tools button { height: 17px; border-bottom: 1px solid #c8c8c8; }
.main-tools button:nth-child(5n) { margin-bottom: 1px; }
.solid-tools button.sep { height: 17px; border-bottom: 1px solid #c8c8c8; }

.view { position: relative; overflow: hidden; background: #fff; }
.scene { display: block; width: 100%; height: 100%; }
.plane { fill: #e1fdff; stroke: #3c5260; }
.top { fill: #dfb344; }
.side { fill: #7f6526; }
.wire { fill: none; stroke: #d3d3d3; }
.over { opacity: .8; }
.faint { opacity: .35; }
.edge { fill: none; stroke: #222; }
.axis { fill: none; stroke: #3a3a6a; stroke-width: 1; stroke-dasharray: 6 2 1 2; }
.triad { font: 9px "Liberation Sans", sans-serif; fill: #000; }

/* Scroll bars */
.vscroll, .hscroll, .track { display: flex; }
.vscroll, .vscroll .track { flex-direction: column; }
.hscroll { grid-column: 3; grid-row: 2; }
.track { flex: 1; }
.vscroll button { height: 11px; padding: 2px; }
.hscroll button { width: 11px; padding: 2px; }
.vscroll path, .hscroll path { fill: none; stroke: #444; }
.thumb { background: #cdcdcd; }
.vscroll .before { flex: 122; }
.vscroll .thumb { flex: 386; }
.vscroll .after { flex: 11; }
.hscroll .before { flex: 134; }
.hscroll .thumb { flex: 821; }
.hscroll .after { flex: 149; }

/* Floating windows */
.panel {
  position: absolute;
  border: 1px solid #c4c4c4;
  background: #f0f0f0;
  box-shadow: 1px 2px 4px rgba(0, 0, 0, .3);
}
.panel header {
  display: flex;
  align-items: center;
  height: 18px;
  padding: 0 5px 0 4px;
  background: #fff;
  color: #888;
}
.panel header button { width: 8px; height: 8px; margin-left: auto; }
.panel header .ghost { width: 12px; height: 12px; background: #dedede; }
.status-panel { top: 34px; right: 8px; width: 118px; border-color: #e4e4e4; }
.status-panel header { padding-right: 0; }
.status-body { display: flex; justify-content: space-between; height: 139px; }
.status-names { width: 60px; border-right: 1px solid #888; }
.status-fields { display: grid; grid-auto-rows: 1fr; width: 51px; height: 125px; }
.status-fields input { width: 100%; min-height: 0; border: 1px solid #8c8c8c; background: #fff; }
.camera-panel { top: 205px; right: 18px; width: 107px; }
.camera-body { display: flex; align-items: center; gap: 2px; height: 48px; }
.globe { flex: none; width: 42px; height: 42px; }
.minis { display: grid; gap: 5px; }
.mini { width: 14px; height: 14px; }
.dim-panel { top: 288px; right: 41px; width: 75px; }
.dim-body { display: grid; grid-template-columns: repeat(4, 14px); gap: 2px; height: 41px; padding: 4px 3px; align-content: start; }
.mini .t { fill: #666; }
.mini .l { fill: #fff; }
.mini .r { fill: #fff; }
.gb .l, .wg .r, .gb2 .l { fill: #cdcdcd; }
.gb .r, .bb .l, .gb2 .r, .bo .l, .bo2 .l { fill: #86c9f5; }
.bb .r { fill: #b8def8; }
.bo .r, .bo2 .r, .ow .l, .ow2 .l { fill: #fbc67c; }
.mini .l, .mini .r { stroke: #ccc; stroke-width: .4; }

/* Status bar */
.statusbar { display: flex; align-items: center; gap: 2px; flex: none; height: 19px; }
.statusbar p { height: 15px; border-top: 1px solid #a8a8a8; border-right: 1px solid #d8d8d8; line-height: 15px; }
.mode { width: 121px; }
.hint { flex: 1; margin-right: 186px; border-left: 1px solid #a8a8a8; }
.logo { flex: none; width: 40px; height: 18px; }
.logo-a { font: 700 9px "DejaVu Sans", sans-serif; fill: #fff; }
.logo-b { font: italic 700 8px "DejaVu Sans", sans-serif; fill: #111; }
```
